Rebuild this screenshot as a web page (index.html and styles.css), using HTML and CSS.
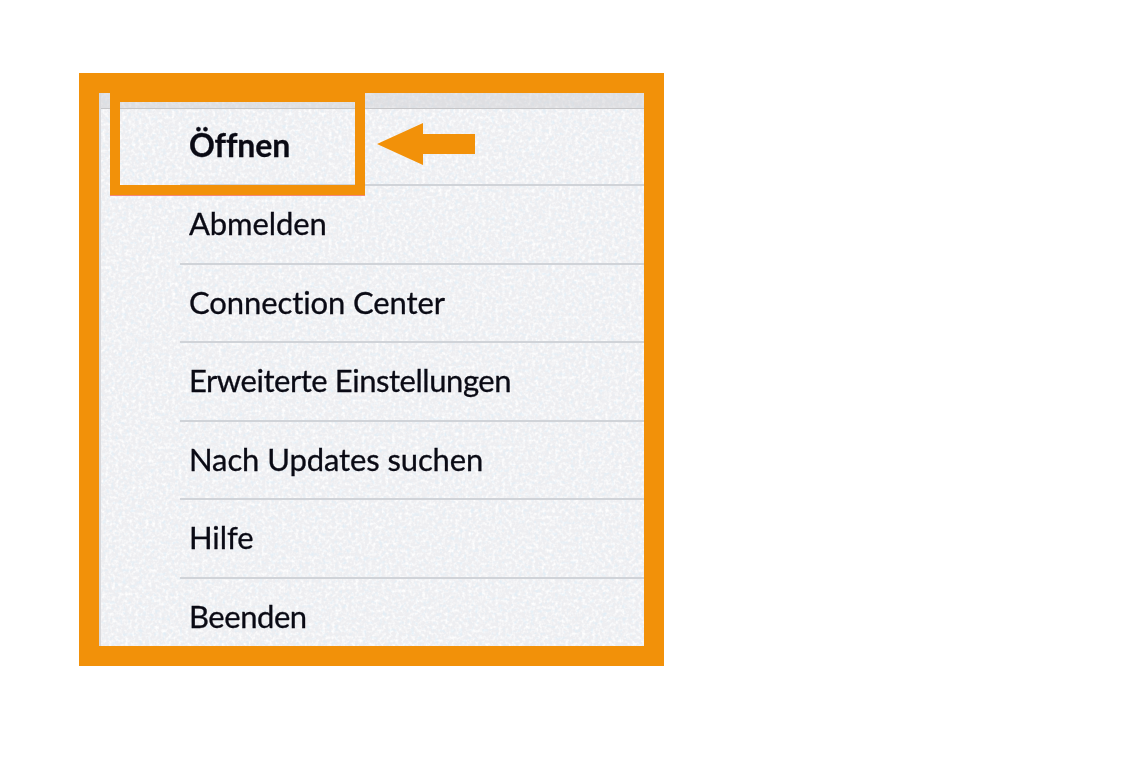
FILE: index.html
```html
<!DOCTYPE html>
<html lang="de">
<head>
    <meta charset="UTF-8">
    <meta name="viewport" content="width=device-width, initial-scale=1.0">
    <link rel="stylesheet" href="styles.css">
    <title>Öffnen</title>
</head>
<body>
    <div class="frame">
        <svg class="noise" width="545" height="553" aria-hidden="true">
            <filter id="grain">
                <feTurbulence type="fractalNoise" baseFrequency="0.3" numOctaves="2" seed="4"></feTurbulence>
                <feColorMatrix type="matrix" values="0 0 0 0 1  0 0 0 0 1  0 0 0 0 1  0 0 0 2.4 -1"></feColorMatrix>
                <feGaussianBlur stdDeviation="0.6"></feGaussianBlur>
            </filter>
            <filter id="grain-blue">
                <feTurbulence type="fractalNoise" baseFrequency="0.25" numOctaves="2" seed="11"></feTurbulence>
                <feColorMatrix type="matrix" values="0 0 0 0 0.72  0 0 0 0 0.85  0 0 0 0 0.94  0 0 0 2 -1.05"></feColorMatrix>
                <feGaussianBlur stdDeviation="0.6"></feGaussianBlur>
            </filter>
            <rect width="545" height="553" filter="url(#grain)"></rect>
            <rect width="545" height="553" filter="url(#grain-blue)"></rect>
        </svg>
        <div class="menu">
            <div class="menu-top"></div>
            <div class="menu-item menu-item-default"><span>Öffnen</span></div>
            <div class="menu-item"><span>Abmelden</span></div>
            <div class="menu-item"><span>Connection Center</span></div>
            <div class="menu-item menu-item-tight"><span>Erweiterte Einstellungen</span></div>
            <div class="menu-item"><span>Nach Updates suchen</span></div>
            <div class="menu-item"><span>Hilfe</span></div>
            <div class="menu-item menu-item-tight"><span>Beenden</span></div>
        </div>
        <div class="highlight"></div>
        <svg class="arrow" width="98" height="42" viewBox="0 0 98 42" aria-hidden="true">
            <polygon points="0,21 46,0 46,11 98,11 98,31 46,31 46,42"></polygon>
        </svg>
    </div>
</body>
</html>
```

FILE: styles.css
```css
body {
    margin: 0;
    padding: 73px 0 0 79px;
    background-color: #fff;
}

.frame {
    position: relative;
    width: 545px;
    height: 553px;
    border: 20px solid #f29109;
    background-color: #eeeef1;
    overflow: hidden;
}

.noise {
    position: absolute;
    left: 0;
    top: 0;
}

.menu {
    position: relative;
    border-left: 2px solid #d9d9dc;
    font-family: Lato, sans-serif;
    font-size: 31px;
    font-variant-ligatures: none;
    letter-spacing: -0.1px;
    color: #0a0a14;
    -webkit-text-stroke: 0.3px #0a0a14;
}

.menu-top {
    height: 15px;
    background-color: rgba(205, 205, 208, 0.45);
    border-bottom: 1px solid #c6c6c8;
}

.menu-item {
    display: flex;
    align-items: center;
    box-sizing: border-box;
    height: 78.5px;
    margin-left: 79px;
    padding-left: 9px;
    padding-bottom: 2px;
    border-bottom: 2px solid #d0d3d8;
}

.menu-item span {
    filter: blur(0.5px);
}

.menu-item-default {
    height: 77px;
    padding-bottom: 4px;
    font-size: 32px;
    font-weight: 700;
}

.menu-item-tight {
    letter-spacing: -0.45px;
}

.highlight {
    position: absolute;
    left: 11px;
    top: 0;
    box-sizing: border-box;
    width: 255px;
    height: 102px;
    border: 10px solid #f29109;
    border-top-width: 9px;
    box-shadow: 0 1px 0 #f4877a;
}

.arrow {
    position: absolute;
    left: 278px;
    top: 30px;
    fill: #f29109;
}
```
